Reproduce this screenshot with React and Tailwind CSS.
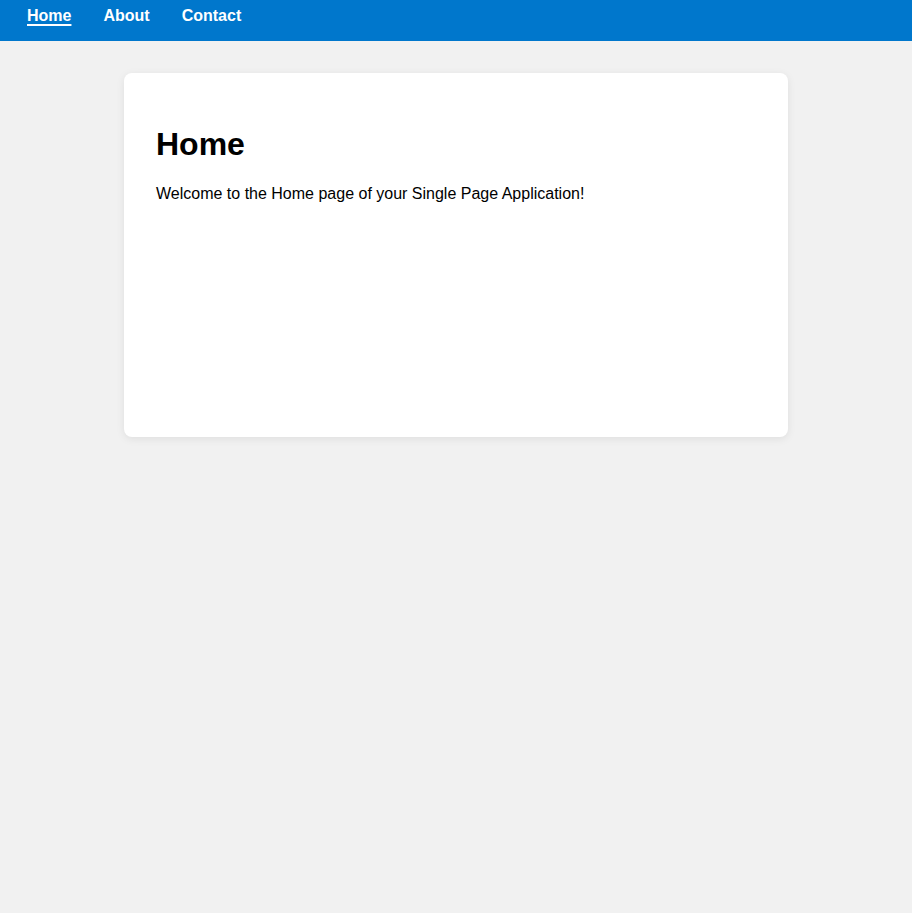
export default function App() {
  const links = ["Home", "About", "Contact"];
  return (
    <div className="min-h-screen bg-[#f1f1f1] font-['Liberation_Sans',Arial,sans-serif] text-black">
      <nav className="h-[41px] bg-[#0077cc] px-[27px] pt-[4px]">
        <ul className="flex gap-[32px]">
          {links.map((l, i) => (
            <li key={l}>
              <a
                href="#"
                className={`text-base font-bold leading-[18px] text-white ${i === 0 ? "underline underline-offset-[3px] decoration-2" : "no-underline"}`}
              >
                {l}
              </a>
            </li>
          ))}
        </ul>
      </nav>
      <main className="mx-auto mt-[32px] box-border min-h-[364px] w-[664px] rounded-lg bg-white p-8 shadow-[0_2px_8px_rgba(0,0,0,0.08)]">
        <h1 className="mt-[21px] text-[32px] font-bold leading-[37px]">Home</h1>
        <p className="mt-[22px] text-base leading-[18px]">
          Welcome to the Home page of your Single Page Application!
        </p>
      </main>
    </div>
  );
}
